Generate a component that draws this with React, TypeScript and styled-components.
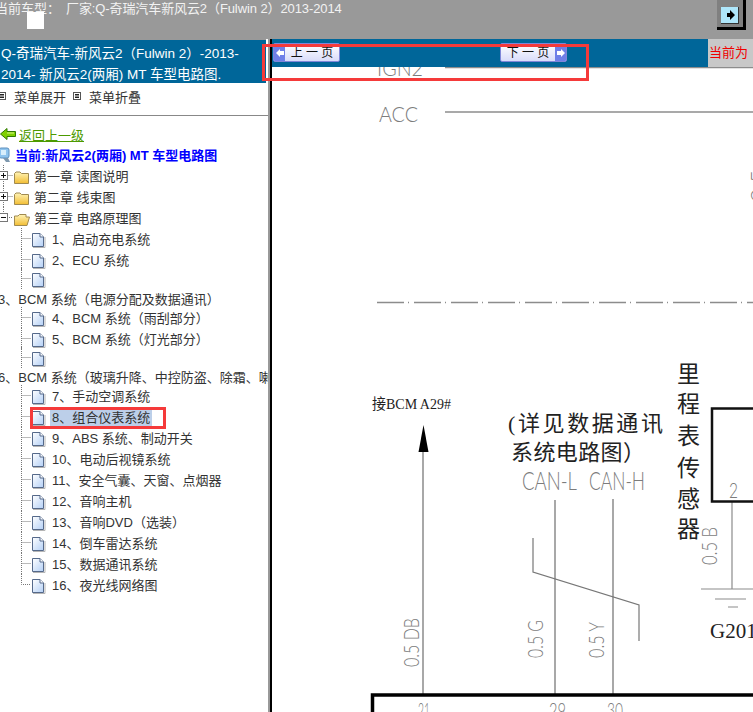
import React from "react"
import styled, { createGlobalStyle } from "styled-components"

const FONT = `"Liberation Sans", "Noto Sans CJK SC", sans-serif`
const SERIF = `"Liberation Serif", "Noto Sans CJK SC", serif`
const THIN = `"Lato", "Liberation Sans", sans-serif`

const GlobalStyle = createGlobalStyle`
  html, body { margin: 0; padding: 0; height: 100%; overflow: hidden; background: #fff; }
  body { font-family: ${FONT}; font-size: 13px; color: #333; }
`

type TreeItem =
  | { kind: "chapter"; label: string; open?: boolean; last?: boolean }
  | { kind: "page"; label: string; selected?: boolean; last?: boolean }
  | { kind: "wrapped"; label: string }

const TREE: TreeItem[] = [
  { kind: "chapter", label: "第一章 读图说明" },
  { kind: "chapter", label: "第二章 线束图" },
  { kind: "chapter", label: "第三章 电路原理图", open: true, last: true },
  { kind: "page", label: "1、启动充电系统" },
  { kind: "page", label: "2、ECU 系统" },
  { kind: "wrapped", label: "3、BCM 系统（电源分配及数据通讯）" },
  { kind: "page", label: "4、BCM 系统（雨刮部分）" },
  { kind: "page", label: "5、BCM 系统（灯光部分）" },
  { kind: "wrapped", label: "6、BCM 系统（玻璃升降、中控防盗、除霜、喇叭）" },
  { kind: "page", label: "7、手动空调系统" },
  { kind: "page", label: "8、组合仪表系统", selected: true },
  { kind: "page", label: "9、ABS 系统、制动开关" },
  { kind: "page", label: "10、电动后视镜系统" },
  { kind: "page", label: "11、安全气囊、天窗、点烟器" },
  { kind: "page", label: "12、音响主机" },
  { kind: "page", label: "13、音响DVD（选装）" },
  { kind: "page", label: "14、倒车雷达系统" },
  { kind: "page", label: "15、数据通讯系统" },
  { kind: "page", label: "16、夜光线网络图", last: true },
]

const ListIcon = () => (
  <svg width="8" height="8" viewBox="0 0 8 8">
    <rect x="0.5" y="0.5" width="7" height="7" fill="#fff" stroke="#555" />
    <path d="M2 2.5h4M2 4h4M2 5.5h4" stroke="#222" strokeWidth="1" />
  </svg>
)

const BackArrow = () => (
  <svg width="16" height="12" viewBox="0 0 16 12">
    <path d="M0.5 6 L7 0.5 V3.5 H15.5 V8.5 H7 V11.5 Z" fill="#7fd000" stroke="#2f7a00" />
    <path d="M7 5 H14" stroke="#d8f58a" strokeWidth="1" />
  </svg>
)

const ComputerIcon = () => (
  <svg width="13" height="16" viewBox="0 0 13 16">
    <rect x="1" y="1" width="10" height="10" rx="2" fill="#8fc4ee" stroke="#5c8fbd" />
    <rect x="3" y="3" width="5" height="5" fill="#d8eefc" />
    <path d="M5 11 L8 15 H12 L10 11 Z" fill="#7d97ad" />
  </svg>
)

const Connector = ({ last }: { last?: boolean }) => (
  <svg width="18" height="21" viewBox="0 0 18 21">
    <path d={last ? "M8.5 0V10.5H18" : "M8.5 0V21M8.5 10.5H18"} stroke="#777" strokeDasharray="1 1" fill="none" />
  </svg>
)

const Join = ({ open, last }: { open?: boolean; last?: boolean }) => (
  <svg width="18" height="21" viewBox="0 0 18 21">
    <path d={last ? "M8.5 0V10.5H18" : "M8.5 0V21M8.5 10.5H18"} stroke="#777" strokeDasharray="1 1" fill="none" />
    <rect x="4.5" y="6.5" width="8" height="8" fill="#fff" stroke="#777" />
    <path d={open ? "M6 10.5h5" : "M6 10.5h5M8.5 8v5"} stroke="#111" fill="none" />
  </svg>
)

const Folder = ({ open }: { open?: boolean }) => (
  <svg width="18" height="21" viewBox="0 0 18 21">
    <defs>
      <linearGradient id="folderFill" x1="0" y1="0" x2="0" y2="1">
        <stop offset="0" stopColor="#fff4b8" />
        <stop offset="1" stopColor="#f2bd33" />
      </linearGradient>
    </defs>
    {open ? (
      <path d="M1.5 9 H5 L6.5 7.5 H13 V10 H16.5 L14 18.5 H1.5 Z" fill="url(#folderFill)" stroke="#a08a50" />
    ) : (
      <path d="M1.5 8.5 L3 7 H7 L8.5 8.5 H15.5 V18.5 H1.5 Z" fill="url(#folderFill)" stroke="#a08a50" />
    )}
  </svg>
)

const PageIcon = () => (
  <svg width="18" height="21" viewBox="0 0 18 21">
    <defs>
      <linearGradient id="pageFill" x1="0" y1="0" x2="1" y2="1">
        <stop offset="0" stopColor="#ffffff" />
        <stop offset="1" stopColor="#b4d0f6" />
      </linearGradient>
    </defs>
    <path d="M2 19.5 H14 V9" stroke="#b5b5b5" fill="none" />
    <path d="M1.5 5.5 H9 L12.5 9 V18.5 H1.5 Z" fill="url(#pageFill)" stroke="#55698a" />
    <path d="M9 5.5 V9 H12.5" fill="#fff" stroke="#55698a" />
  </svg>
)

const TreeRowView = ({ item }: { item: TreeItem }) => {
  if (item.kind === "chapter") {
    return (
      <S.Row>
        <Join open={item.open} last={item.last} />
        <Folder open={item.open} />
        <S.Label>{item.label}</S.Label>
      </S.Row>
    )
  }
  if (item.kind === "wrapped") {
    return (
      <>
        <S.Row $height={17.5}>
          <S.Indent />
          <Connector />
          <PageIcon />
        </S.Row>
        <S.WrappedLabel>{item.label}</S.WrappedLabel>
      </>
    )
  }
  return (
    <S.Row>
      <S.Indent />
      <Connector last={item.last} />
      <PageIcon />
      <S.Label $selected={item.selected}>{item.label}</S.Label>
    </S.Row>
  )
}

const Schematic = () => (
  <S.Drawing viewBox="272 67 481 645" xmlns="http://www.w3.org/2000/svg">
    <g stroke="#8c8c8c" fill="none">
      <path d="M445 67.5H753" strokeWidth="1.5" />
      <path d="M445 112H753" strokeWidth="1.5" />
      <path d="M377 302.5H753" strokeWidth="1.5" strokeDasharray="27 4 1 5" />
      <path d="M423 448V694M555 500V694M613 499V694" strokeWidth="1.5" />
      <path d="M533 538V572L639 605V641" strokeWidth="1.2" stroke="#777" />
      <path d="M732 502V589M701 589H753M715 599H746M728 607H738" strokeWidth="1.2" />
    </g>
    <path d="M423.5 425 L428.5 452 H418.5 Z" fill="#000" />
    <rect x="712" y="408.5" width="60" height="93" fill="none" stroke="#111" strokeWidth="2.5" />
    <path d="M372.5 712V695H760" fill="none" stroke="#000" strokeWidth="3.5" />

    <S.CadText x="377" y="76" fontSize="22" textLength="46" lengthAdjust="spacingAndGlyphs">IGN2</S.CadText>
    <S.CadText x="379" y="121.5" fontSize="22" textLength="39" lengthAdjust="spacingAndGlyphs">ACC</S.CadText>
    <S.CadText x="522" y="490" fontSize="25" textLength="55" lengthAdjust="spacingAndGlyphs">CAN-L</S.CadText>
    <S.CadText x="589" y="490" fontSize="25" textLength="56" lengthAdjust="spacingAndGlyphs">CAN-H</S.CadText>
    <S.CadText x="729" y="498" fontSize="21" textLength="9" lengthAdjust="spacingAndGlyphs">2</S.CadText>
    <S.CadText x="418" y="718" fontSize="21" textLength="12" lengthAdjust="spacingAndGlyphs">21</S.CadText>
    <S.CadText x="549" y="718" fontSize="21" textLength="17" lengthAdjust="spacingAndGlyphs">29</S.CadText>
    <S.CadText x="607" y="718" fontSize="21" textLength="16" lengthAdjust="spacingAndGlyphs">30</S.CadText>

    <S.CadText transform="translate(419 667) rotate(-90)" fontSize="21" textLength="49" lengthAdjust="spacingAndGlyphs">0.5 DB</S.CadText>
    <S.CadText transform="translate(543 658) rotate(-90)" fontSize="21" textLength="38" lengthAdjust="spacingAndGlyphs">0.5 G</S.CadText>
    <S.CadText transform="translate(604 658) rotate(-90)" fontSize="21" textLength="36" lengthAdjust="spacingAndGlyphs">0.5 Y</S.CadText>
    <S.CadText transform="translate(717 565) rotate(-90)" fontSize="21" textLength="38" lengthAdjust="spacingAndGlyphs">0.5 B</S.CadText>
    <S.CadText transform="translate(766 202) rotate(-90)" fontSize="21" textLength="32" lengthAdjust="spacingAndGlyphs">0.5</S.CadText>

    <S.NoteText x="372" y="409" fontSize="15" textLength="79" lengthAdjust="spacingAndGlyphs">接BCM A29#</S.NoteText>
    <S.NoteText x="508" y="431" fontSize="22" textLength="155">(详见数据通讯</S.NoteText>
    <S.NoteText x="511" y="460" fontSize="22" textLength="134">系统电路图）</S.NoteText>
    {["里", "程", "表", "传", "感", "器"].map((ch, i) => (
      <S.NoteText key={ch} x="677" y={[382, 412, 444, 476, 507, 537][i]} fontSize="23">{ch}</S.NoteText>
    ))}
    <S.NoteText x="710" y="638" fontSize="21">G201</S.NoteText>
  </S.Drawing>
)

export default function App() {
  return (
    <S.Page>
      <GlobalStyle />
      <S.TopBar>
        <S.CarInfo>当前车型：<S.Maker>厂家:Q-奇瑞汽车新风云2（Fulwin 2）2013-2014</S.Maker></S.CarInfo>
        <S.WhiteSquare />
        <S.Toggle>
          <S.ToggleInner>
            <svg width="8" height="10" viewBox="0 0 8 10"><path d="M0 3H3V0L8 5L3 10V7H0Z" fill="#000" /></svg>
          </S.ToggleInner>
        </S.Toggle>
      </S.TopBar>
      <S.Body>
        <S.Sidebar>
          <S.SideTitle>Q-奇瑞汽车-新风云2（Fulwin 2）-2013-2014- 新风云2(两厢) MT 车型电路图.</S.SideTitle>
          <S.MenuRow>
            <S.MenuAction><ListIcon />菜单展开</S.MenuAction>
            <S.MenuAction><ListIcon />菜单折叠</S.MenuAction>
          </S.MenuRow>
          <S.BackRow><BackArrow /><S.BackLink>返回上一级</S.BackLink></S.BackRow>
          <S.CurrentRow><ComputerIcon /><S.CurrentLabel>当前:新风云2(两厢) MT 车型电路图</S.CurrentLabel></S.CurrentRow>
          <S.Tree>
            {TREE.map(item => <TreeRowView key={item.label} item={item} />)}
          </S.Tree>
        </S.Sidebar>
        <S.Splitter />
        <S.Main>
          <S.Toolbar>
            <S.PagerGroup>
              <S.PagerButton>
                <S.PagerArrow><svg width="8" height="8" viewBox="0 0 8 8"><path d="M0 4L4 0V2H8V6H4V8Z" fill="#fff" /></svg></S.PagerArrow>
                <S.PagerText>上 一 页</S.PagerText>
              </S.PagerButton>
              <S.PagerButton>
                <S.PagerText>下 一 页</S.PagerText>
                <S.PagerArrow><svg width="8" height="8" viewBox="0 0 8 8"><path d="M8 4L4 0V2H0V6H4V8Z" fill="#fff" /></svg></S.PagerArrow>
              </S.PagerButton>
            </S.PagerGroup>
            <S.CurrentCell>当前为</S.CurrentCell>
          </S.Toolbar>
          <S.Canvas><Schematic /></S.Canvas>
        </S.Main>
      </S.Body>
      <S.Callout $x={262} $y={44} $w={327} $h={37} />
      <S.Callout $x={30} $y={407} $w={136} $h={22} />
    </S.Page>
  )
}

const S = {
  Page: styled.div`
    position: relative;
    width: 753px;
    height: 712px;
    display: flex;
    flex-direction: column;
    overflow: hidden;
  `,
  TopBar: styled.header`
    position: relative;
    flex: 0 0 39px;
    background: #999;
    overflow: hidden;
  `,
  CarInfo: styled.div`
    margin-left: -5px;
    line-height: 17px;
    white-space: nowrap;
    color: #f2f2f2;
  `,
  Maker: styled.span`
    margin-left: 6px;
    letter-spacing: -0.1px;
  `,
  WhiteSquare: styled.div`
    position: absolute;
    left: 27px;
    top: 12px;
    width: 17px;
    height: 17px;
    background: #fff;
  `,
  Toggle: styled.div`
    position: absolute;
    left: 717px;
    top: 0;
    width: 29px;
    height: 30px;
    box-sizing: border-box;
    display: flex;
    align-items: center;
    justify-content: center;
    padding-top: 3px;
    background: #808080;
    border-right: 3px solid #000;
    border-bottom: 3px solid #000;
  `,
  ToggleInner: styled.div`
    width: 18px;
    height: 17px;
    box-sizing: border-box;
    display: flex;
    align-items: center;
    justify-content: center;
    padding-left: 3px;
    background: #aee6fa;
    border-right: 1px solid #333;
    border-bottom: 1px solid #333;
  `,
  Body: styled.div`
    flex: 1;
    display: flex;
    min-height: 0;
  `,
  Sidebar: styled.aside`
    flex: 0 0 268px;
    overflow: hidden;
    background: #fff;
  `,
  SideTitle: styled.div`
    box-sizing: border-box;
    height: 44px;
    width: 266px;
    padding: 3px 0 0 1px;
    border-top: 1px solid #999;
    background: #006699;
    color: #fff;
    font-size: 13.5px;
    line-height: 21px;
  `,
  MenuRow: styled.div`
    height: 26px;
    display: flex;
    align-items: center;
    gap: 7px;
    margin-left: -2px;
    border-bottom: 1px solid #888;
    padding-bottom: 6px;
  `,
  MenuAction: styled.span`
    display: flex;
    align-items: center;
    gap: 8px;
  `,
  BackRow: styled.div`
    height: 20px;
    margin-top: 8px;
    display: flex;
    align-items: center;
    gap: 3px;
  `,
  BackLink: styled.span`
    color: #4c9a00;
    text-decoration: underline;
  `,
  CurrentRow: styled.div`
    height: 21px;
    margin-left: -2px;
    display: flex;
    align-items: center;
    gap: 4px;
  `,
  CurrentLabel: styled.span`
    color: #0000ff;
    font-weight: bold;
  `,
  Tree: styled.div`
    margin-left: -5px;
  `,
  Row: styled.div<{ $height?: number }>`
    height: ${p => p.$height ?? 21}px;
    display: flex;
    align-items: center;
    white-space: nowrap;
  `,
  Indent: styled.span`
    flex: 0 0 18px;
  `,
  Label: styled.span<{ $selected?: boolean }>`
    margin-left: ${p => (p.$selected ? 1 : 3)}px;
    padding: ${p => (p.$selected ? "0 2px" : 0)};
    background: ${p => (p.$selected ? "#bccfe9" : "transparent")};
  `,
  WrappedLabel: styled.div`
    height: 19px;
    line-height: 23px;
    margin-left: 3px;
    white-space: nowrap;
  `,
  Splitter: styled.div`
    flex: 0 0 4px;
    box-sizing: border-box;
    background: #000;
    border-left: 2px solid #999;
  `,
  Main: styled.main`
    flex: 1;
    min-width: 0;
    display: flex;
    flex-direction: column;
    background: #fff;
  `,
  Toolbar: styled.div`
    flex: 0 0 28px;
    display: flex;
    background: #006699;
  `,
  PagerGroup: styled.div`
    flex: 1;
    display: flex;
    gap: 160px;
    padding: 4px 0 0 1px;
  `,
  PagerButton: styled.div`
    width: 67px;
    height: 19px;
    box-sizing: border-box;
    display: flex;
    align-items: stretch;
    overflow: hidden;
    border-radius: 2px;
    border: 1px solid #7f86d8;
    background: linear-gradient(#ffffff, #d9dcfa);
  `,
  PagerArrow: styled.span`
    flex: 0 0 11px;
    display: flex;
    align-items: center;
    justify-content: center;
    background: #6f7fe8;
  `,
  PagerText: styled.span`
    flex: 1;
    text-align: center;
    font-size: 12px;
    line-height: 18px;
    color: #111;
  `,
  CurrentCell: styled.div`
    flex: 0 0 45px;
    padding-left: 1px;
    box-sizing: border-box;
    background: #c8c8c8;
    color: #f00000;
    line-height: 28px;
    white-space: nowrap;
  `,
  Canvas: styled.div`
    flex: 1;
    min-height: 0;
  `,
  Drawing: styled.svg`
    display: block;
    width: 481px;
    height: 645px;
  `,
  CadText: styled.text`
    font-family: ${THIN};
    font-weight: 300;
    fill: #7c7c7c;
  `,
  NoteText: styled.text`
    font-family: ${SERIF};
    fill: #222;
  `,
  Callout: styled.div<{ $x: number; $y: number; $w: number; $h: number }>`
    position: absolute;
    left: ${p => p.$x}px;
    top: ${p => p.$y}px;
    width: ${p => p.$w}px;
    height: ${p => p.$h}px;
    box-sizing: border-box;
    border: 3px solid #f53a3a;
    pointer-events: none;
  `,
}
